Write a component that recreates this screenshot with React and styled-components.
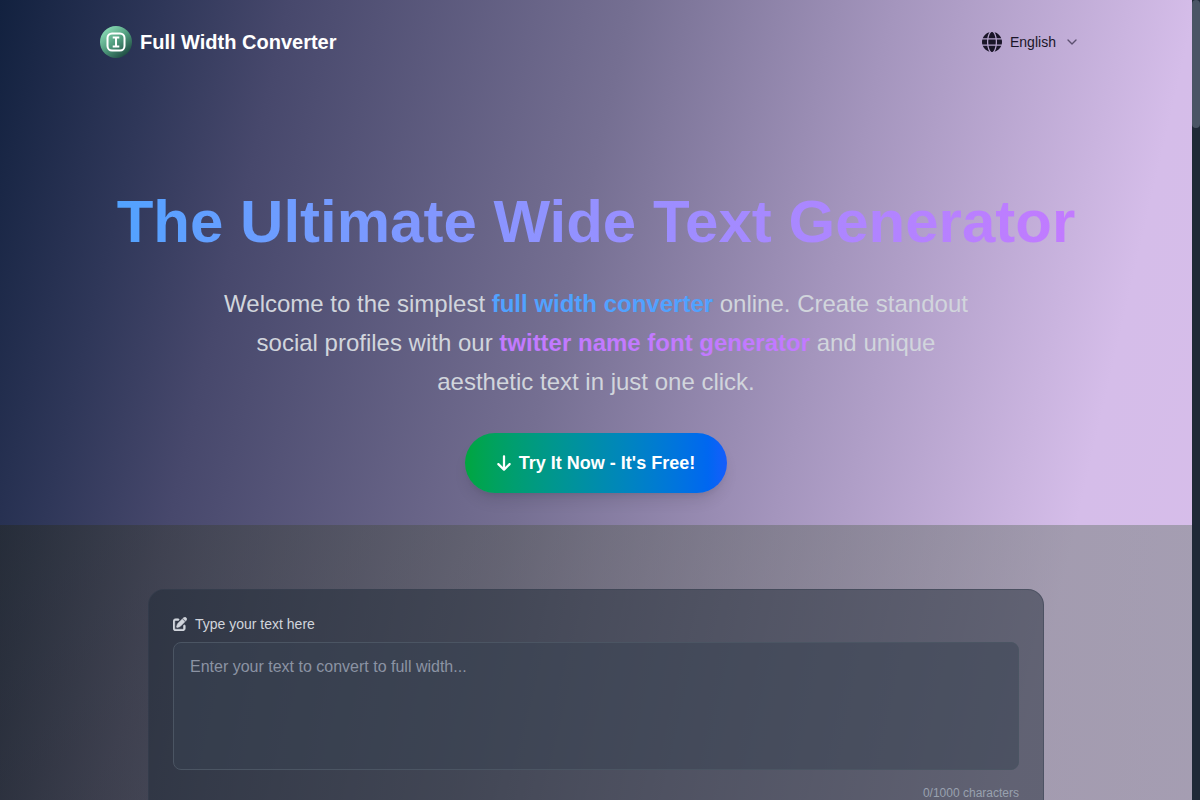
import {useState} from "react";
import styled, {createGlobalStyle} from "styled-components";
import {FaArrowDown, FaGlobe, FaPenToSquare} from "react-icons/fa6";
import {FiChevronDown} from "react-icons/fi";

const GlobalStyle = createGlobalStyle`
    *{
        box-sizing: border-box;
    }
    body{
        margin: 0;
        background: #1f2937;
        color: #ffffff;
        font-family: "Liberation Sans", Arial, sans-serif;
    }
`;
const Shell = styled.div`
    display: grid;
    grid-template-columns: minmax(0, 1fr) 8px;
    height: 100vh;
`;
const Page = styled.div`
    overflow-y: auto;
    scrollbar-width: none;
    background: linear-gradient(103deg, #12213f 0%, #2f3759 12%, #47486c 21%, #756f92 46%, #a495bd 65%, #d5bde9 87%, #d7bdea 100%);
`;
const Rail = styled.div`
    background: #1f2937;
`;
const Thumb = styled.div`
    height: 16vh;
    border-radius: 4px;
    background: #4a5565;
`;
const Header = styled.header`
    display: flex;
    justify-content: space-between;
    align-items: center;
    max-width: 1024px;
    margin: 0 auto;
    padding: 26px 16px;
`;
const Brand = styled.a`
    display: flex;
    align-items: center;
    gap: 8px;
    color: #ffffff;
    font-size: 20px;
    font-weight: 700;
    line-height: 28px;
    text-decoration: none;
    svg{
        display: block;
    }
`;
const Language = styled.label`
    display: flex;
    align-items: center;
    gap: 8px;
    padding: 0 12px;
    color: #1a1528;
    select{
        appearance: none;
        border: 0;
        padding: 0;
        background: transparent;
        color: inherit;
        font: 14px/20px "Liberation Sans", Arial, sans-serif;
        cursor: pointer;
    }
    .chevron{
        color: #5c5070;
    }
`;
const Hero = styled.section`
    display: flex;
    flex-direction: column;
    align-items: center;
    padding: 100px 32px 32px;
    text-align: center;
`;
const Title = styled.h1`
    margin: 0 0 25px;
    background: linear-gradient(to right in oklab, #51a2ff, #c27aff);
    background-clip: text;
    color: transparent;
    font-size: 60px;
    font-weight: 700;
    line-height: 75px;
`;
const Lead = styled.p`
    max-width: 768px;
    margin: 0 0 32px;
    color: #d1d5dc;
    font-size: 24px;
    line-height: 39px;
`;
const Mark = styled.strong`
    color: ${({$tone}) => $tone === "blue" ? "#51a2ff" : "#c27aff"};
    font-weight: 600;
`;
const TryButton = styled.button`
    display: flex;
    align-items: center;
    gap: 8px;
    border: 0;
    border-radius: 30px;
    padding: 16px 32px;
    background: linear-gradient(to right in oklab, #00a63e, #155dfc);
    box-shadow: 0 10px 15px -3px rgba(0, 0, 0, 0.1), 0 4px 6px -4px rgba(0, 0, 0, 0.1);
    color: #ffffff;
    font: 700 18px/28px "Liberation Sans", Arial, sans-serif;
    cursor: pointer;
    svg{
        width: 14px;
        height: 18px;
    }
`;
const Tool = styled.section`
    padding: 64px 32px;
    background: linear-gradient(to right, rgba(36, 38, 20, 0.4), rgba(56, 62, 46, 0.4) 17%, rgba(82, 90, 76, 0.4) 50%, rgba(90, 110, 94, 0.4));
`;
const Card = styled.div`
    max-width: 896px;
    margin: 0 auto;
    border: 1px solid rgba(55, 65, 81, 0.5);
    border-radius: 16px;
    padding: 24px;
    background: rgba(31, 41, 55, 0.5);
`;
const FieldLabel = styled.label`
    display: flex;
    align-items: center;
    gap: 8px;
    margin-bottom: 8px;
    color: #d1d5dc;
    font-size: 14px;
    line-height: 20px;
    path{
        stroke: currentColor;
        stroke-width: 20;
    }
`;
const TextBox = styled.textarea`
    display: block;
    width: 100%;
    height: 128px;
    border: 1px solid #4b5563;
    border-radius: 8px;
    padding: 12px 16px;
    background: rgba(55, 65, 81, 0.5);
    color: #ffffff;
    font: 16px/24px "Liberation Sans", Arial, sans-serif;
    resize: none;
    &::placeholder{
        color: #8b93a3;
    }
`;
const Counter = styled.div`
    margin-top: 15px;
    color: #99a1af;
    font-size: 12px;
    line-height: 16px;
    text-align: right;
`;

const Logo = () => (
    <svg width="32" height="32" viewBox="0 0 32 32" fill="none" aria-hidden="true">
        <defs>
            <linearGradient id="logo" x1="5" y1="4" x2="25" y2="30" gradientUnits="userSpaceOnUse">
                <stop stopColor="#86d8b2" />
                <stop offset="0.5" stopColor="#4f9a7c" />
                <stop offset="1" stopColor="#1f4c43" />
            </linearGradient>
        </defs>
        <circle cx="16" cy="16" r="16" fill="url(#logo)" />
        <rect x="7.5" y="7.5" width="17" height="17" rx="4.5" stroke="#ffffff" strokeWidth="2" />
        <path d="M12.700 11.500h6.600M16 11.500v9M12.700 20.500h6.600" stroke="#ffffff" strokeWidth="2" />
    </svg>
);

const limit = 1000;

const App = () => {
    const [text, setText] = useState("");
    return(
        <Shell>
            <GlobalStyle />
            <Page>
                <Header>
                    <Brand href="#"><Logo />Full Width Converter</Brand>
                    <Language htmlFor="language">
                        <FaGlobe size={20} />
                        <select id="language" aria-label="Language">
                            <option>English</option>
                        </select>
                        <FiChevronDown className="chevron" size={16} />
                    </Language>
                </Header>
                <main>
                    <Hero>
                        <Title>The Ultimate Wide Text Generator</Title>
                        <Lead>
                            Welcome to the simplest <Mark $tone="blue">full width converter</Mark> online. Create standout social profiles with our <Mark $tone="purple">twitter name font generator</Mark> and unique aesthetic text in just one click.
                        </Lead>
                        <TryButton type="button"><FaArrowDown />Try It Now - It's Free!</TryButton>
                    </Hero>
                    <Tool>
                        <Card>
                            <FieldLabel htmlFor="source"><FaPenToSquare />Type your text here</FieldLabel>
                            <TextBox
                                id="source"
                                maxLength={limit}
                                placeholder="Enter your text to convert to full width..."
                                value={text}
                                onChange={(e) => setText(e.target.value)}
                            />
                            <Counter>{text.length}/{limit} characters</Counter>
                        </Card>
                    </Tool>
                </main>
            </Page>
            <Rail><Thumb /></Rail>
        </Shell>
    )
}
export default App;
